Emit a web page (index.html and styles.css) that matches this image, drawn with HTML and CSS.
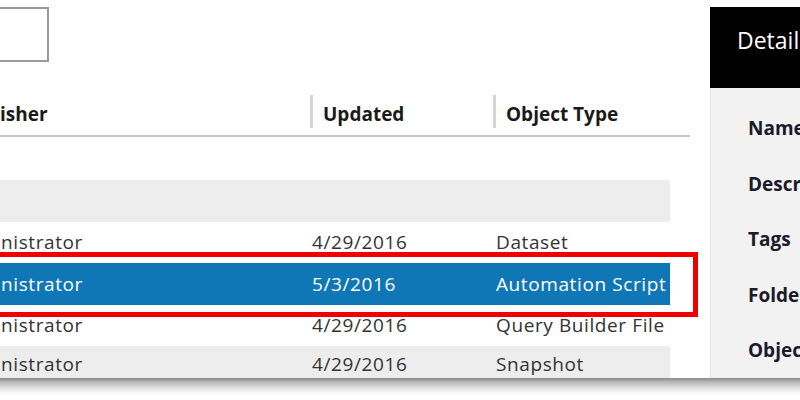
FILE: index.html
```html
<!DOCTYPE html>
<html>
<head>
<meta charset="utf-8">
<link rel="stylesheet" href="styles.css">
</head>
<body>
<div class="page">
  <div class="main">
    <div class="toolbar"><div class="searchbox"></div></div>
    <div class="grid">
      <div class="thead">
        <div class="th first">isher</div>
        <div class="th sep">Updated</div>
        <div class="th sep">Object Type</div>
      </div>
      <div class="spacer"></div>
      <div class="row alt empty"></div>
      <div class="row"><div class="td first">nistrator</div><div class="td">4/29/2016</div><div class="td">Dataset</div></div>
      <div class="row selected"><div class="td first">nistrator</div><div class="td">5/3/2016</div><div class="td">Automation Script</div></div>
      <div class="row"><div class="td first">nistrator</div><div class="td">4/29/2016</div><div class="td">Query Builder File</div></div>
      <div class="row alt last"><div class="td first">nistrator</div><div class="td">4/29/2016</div><div class="td">Snapshot</div></div>
      <div class="highlight"></div>
    </div>
  </div>
  <aside class="details">
    <div class="details-head">Details</div>
    <div class="details-body">
      <div class="label">Name</div>
      <div class="label">Description</div>
      <div class="label">Tags</div>
      <div class="label">Folder</div>
      <div class="label">Object Type</div>
    </div>
  </aside>
</div>
<div class="shadow"></div>
</body>
</html>
```
FILE: styles.css
```css
html, body {
  margin: 0;
  padding: 0;
  background: #fff;
}
body {
  width: 800px;
  height: 400px;
  overflow: hidden;
  font-family: "Open Sans", "Noto Sans", sans-serif;
}
.page {
  display: flex;
  height: 378px;
  overflow: hidden;
}
.main {
  width: 710px;
  flex: none;
}
.toolbar {
  height: 92px;
  padding-top: 7px;
  box-sizing: border-box;
}
.searchbox {
  width: 49px;
  height: 55px;
  box-sizing: border-box;
  border: 2px solid #9a9a9a;
  border-left: none;
}
.grid {
  position: relative;
  width: 690px;
}
.thead {
  display: grid;
  grid-template-columns: 310px 183px 1fr;
  height: 45px;
  border-bottom: 2px solid #c8c8c8;
  box-sizing: border-box;
}
.th {
  font-weight: 700;
  font-size: 19px;
  color: #1a1a1a;
  display: flex;
  align-items: center;
}
.th.sep {
  padding-left: 13px;
  background: linear-gradient(#d4d4d4, #d4d4d4) no-repeat 0 3px / 3px 33px;
}
.spacer {
  height: 43px;
}
.row {
  display: grid;
  grid-template-columns: 312px 184px 1fr;
  width: 670px;
  height: 41.5px;
  align-items: center;
  font-size: 19px;
  line-height: 22px;
  letter-spacing: 0.6px;
  color: #333;
}
.row.last {
  height: 32px;
  box-sizing: border-box;
  padding-bottom: 3px;
  align-items: end;
}
.row.alt {
  background: #ededed;
}
.row.selected {
  background: #0f77b6;
  color: #fff;
}
.td {
  white-space: nowrap;
}
.td.first {
  padding-left: 1px;
}
.highlight {
  position: absolute;
  left: -6px;
  top: 160px;
  width: 704px;
  height: 65px;
  box-sizing: border-box;
  border: 5px solid #ee0000;
}
.details {
  flex: 1;
  display: flex;
  flex-direction: column;
  padding-top: 7px;
  min-width: 0;
}
.details-head {
  flex: none;
  height: 81px;
  background: #000;
  color: #fff;
  font-size: 23px;
  padding-left: 27px;
  line-height: 66px;
  white-space: nowrap;
  overflow: hidden;
}
.details-body {
  flex: 1;
  min-height: 0;
  overflow: hidden;
  background: #f2f2f2;
  border-left: 1px solid #e4e4e4;
  padding-left: 37px;
  padding-top: 27px;
}
.label {
  font-weight: 700;
  font-size: 19px;
  color: #1a1a2a;
  height: 55.5px;
  white-space: nowrap;
}
.shadow {
  height: 22px;
  background: linear-gradient(#8a8a8a 0px, #b8b8b8 4px, #e8e8e8 11px, #fff 17px);
}
```
